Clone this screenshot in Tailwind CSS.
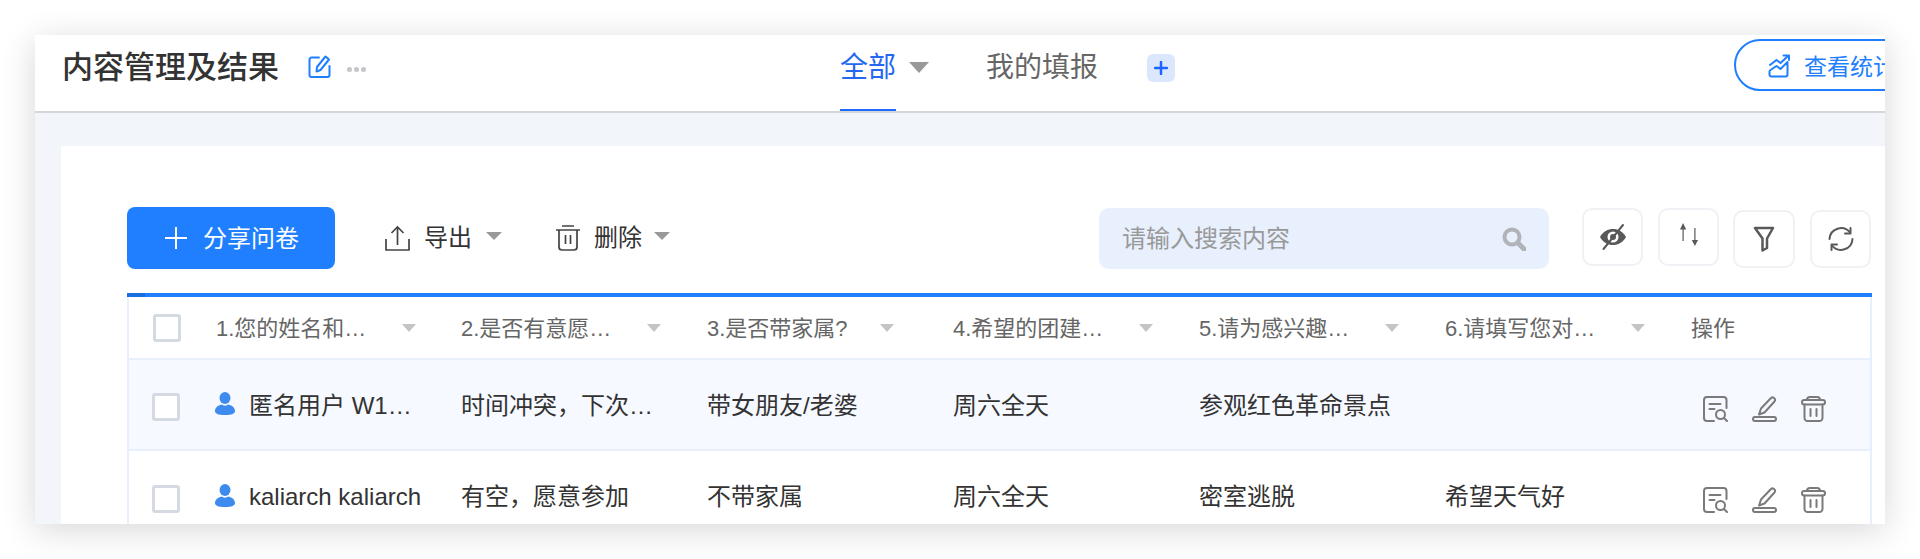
<!DOCTYPE html>
<html lang="zh-CN">
<head>
  <meta charset="UTF-8" />
  <title>内容管理及结果</title>
  <script src="https://cdn.jsdelivr.net/npm/@tailwindcss/browser@4"></script>
</head>
<body class="bg-white h-[559px] overflow-hidden pt-[35px] pl-[35px] font-['Liberation_Sans','Noto_Sans_CJK_SC',sans-serif]">

  <div class="w-[1850px] h-[489px] overflow-hidden flex flex-col bg-[#f2f5fa] shadow-[0_6px_32px_rgba(0,0,0,0.16)]">

    <!-- header -->
    <header class="h-[78px] flex-none flex items-start *:flex-none bg-white border-b-2 border-[#d4d6da] pl-[27px]">
      <h1 class="w-[246px] mt-[11px] text-[31px] leading-[44px] font-medium text-[#333] whitespace-nowrap">内容管理及结果</h1>
      <svg class="mt-[20px] w-[23px] h-[23px] text-[#1f7fff]" viewBox="0 0 23 23" fill="none" stroke="currentColor" stroke-width="2" stroke-linecap="round" stroke-linejoin="round">
        <path d="M11 2.500H3.500a2 2 0 0 0-2 2V20a2 2 0 0 0 2 2H19.500a2 2 0 0 0 2-2V11" />
        <path d="M17.500 1.500l3.500 3L12.500 15l-4 1.500L9 12z" />
      </svg>
      <div class="ml-[16px] mt-[32px] flex gap-[2px]">
        <span class="w-[5px] h-[5px] rounded-full bg-[#c4c6ca]"></span>
        <span class="w-[5px] h-[5px] rounded-full bg-[#c4c6ca]"></span>
        <span class="w-[5px] h-[5px] rounded-full bg-[#c4c6ca]"></span>
      </div>

      <!-- tabs -->
      <div class="ml-[474px] h-[76px] border-b-2 border-[#1f6bff] pt-[13px] text-[28px] leading-[40px] text-[#2468f2] whitespace-nowrap">全部</div>
      <span class="ml-[13px] mt-[27px] w-0 h-0 border-x-[10px] border-x-transparent border-t-[11px] border-t-[#999]"></span>
      <div class="ml-[57px] pt-[13px] text-[28px] leading-[40px] text-[#666] whitespace-nowrap">我的填报</div>
      <div class="ml-[49px] mt-[19px] w-[28px] h-[28px] rounded-[6px] bg-[#dbe7fd] flex items-center justify-center">
        <svg class="w-[14px] h-[14px] text-[#1a66ff]" viewBox="0 0 14 14" fill="none" stroke="currentColor" stroke-width="2.500" stroke-linecap="round"><path d="M7 1v12M1 7h12" /></svg>
      </div>

      <!-- stats button -->
      <div class="ml-[559px] mt-[4px] w-[240px] h-[52px] rounded-full border-2 border-[#1f7fff] flex items-center pl-[32px] text-[#1f7fff]">
        <svg class="w-[24px] h-[24px] flex-none mt-[1px]" viewBox="0 0 24 24" fill="none" stroke="currentColor" stroke-width="2" stroke-linecap="round" stroke-linejoin="round">
          <path d="M1.500 21V18a2 2 0 0 1 1-2l6-4 4 3 7-7V21a2 2 0 0 1-1.500 1.500H3a2 2 0 0 1-1.500-1.500z" />
          <path d="M2 11l6.500-5 4 3 7.500-7" />
          <path d="M15.500 1.500H21V6" />
        </svg>
        <span class="ml-[12px] mt-[3px] text-[23px] leading-[32px] whitespace-nowrap">查看统计</span>
      </div>
    </header>

    <!-- content -->
    <main class="flex-1 min-h-0 pt-[33px] pl-[26px]">
      <div class="h-full bg-white pt-[61px] pl-[66px] pr-[13px]">

        <!-- toolbar -->
        <div class="h-[62px] flex items-start *:flex-none">
          <button class="w-[208px] h-[62px] rounded-[8px] bg-[#1f7fff] text-white flex items-center pl-[37px]">
            <svg class="w-[24px] h-[24px]" viewBox="0 0 24 24" fill="none" stroke="currentColor" stroke-width="2"><path d="M12 1v22M1 12h22" /></svg>
            <span class="ml-[15px] mt-[1px] text-[24px] leading-[34px]">分享问卷</span>
          </button>

          <svg class="ml-[50px] mt-[18px] w-[25px] h-[26px] text-[#444]" viewBox="0 0 25 26" fill="none" stroke="currentColor" stroke-width="1.700">
            <path d="M1 14v11h23V14" /><path d="M12.500 20V2M6.500 8l6-6 6 6" />
          </svg>
          <span class="ml-[14px] mt-[14px] text-[24px] leading-[34px] text-[#333] whitespace-nowrap">导出</span>
          <span class="ml-[14px] mt-[25px] w-0 h-0 border-x-[8px] border-x-transparent border-t-[8px] border-t-[#999]"></span>

          <svg class="ml-[54px] mt-[18px] w-[24px] h-[26px] text-[#444]" viewBox="0 0 24 26" fill="none" stroke="currentColor" stroke-width="1.700" stroke-linejoin="round">
            <path d="M0 5h24M6 1h12" /><path d="M3 5v17a3 3 0 0 0 3 3h12a3 3 0 0 0 3-3V5" /><path d="M9.500 10v9M14.500 10v9" />
          </svg>
          <span class="ml-[14px] mt-[14px] text-[24px] leading-[34px] text-[#333] whitespace-nowrap">删除</span>
          <span class="ml-[12px] mt-[25px] w-0 h-0 border-x-[8px] border-x-transparent border-t-[8px] border-t-[#999]"></span>

          <div class="ml-[429px] mt-[1px] w-[450px] h-[61px] rounded-[10px] bg-[#e8f0fd] flex items-center pl-[23px] pr-[23px]">
            <span class="flex-1 text-[24px] leading-[34px] text-[#999]">请输入搜索内容</span>
            <svg class="w-[24px] h-[24px] text-[#b0b3b8]" viewBox="0 0 24 24" fill="none" stroke="currentColor" stroke-linecap="round">
              <circle cx="10" cy="10" r="7.500" stroke-width="4" /><path d="M16 16l6 6" stroke-width="5" />
            </svg>
          </div>

          <div class="ml-[33px] mt-[1px] w-[61px] h-[58px] rounded-[10px] border-2 border-[#f0f1f5] flex items-center justify-center">
            <svg class="w-[28px] h-[28px] text-[#595959]" viewBox="0 0 28 28" fill="none">
              <path fill="currentColor" fill-rule="evenodd" d="M1 14C4 8.500 9 6 14 6s10 2.500 13 8c-3 5.500-8 8-13 8S4 19.500 1 14zm13-5.500a5.500 5.500 0 1 0 0 11 5.500 5.500 0 0 0 0-11z" />
              <circle cx="14" cy="14" r="3" fill="currentColor" />
              <path d="M4.500 26L24 2" stroke="currentColor" stroke-width="2" stroke-linecap="round" />
            </svg>
          </div>
          <div class="ml-[15px] mt-[1px] w-[61px] h-[58px] rounded-[10px] border-2 border-[#f0f1f5] flex items-center justify-center">
            <svg class="w-[20px] h-[28px] text-[#595959]" viewBox="0 0 20 28" fill="currentColor">
              <path d="M3.500 6h1.200v12H3.500z" /><path d="M4.100 0L1 6.500h6.200z" />
              <path d="M15.300 5h1.200v13h-1.200z" /><path d="M15.900 23L12.800 17h6.200z" />
            </svg>
          </div>
          <div class="ml-[14px] mt-[3px] w-[62px] h-[58px] rounded-[10px] border-2 border-[#f0f1f5] flex items-center justify-center">
            <svg class="w-[22px] h-[26px] text-[#595959]" viewBox="0 0 22 26" fill="none" stroke="currentColor" stroke-width="2.500" stroke-linejoin="round">
              <path d="M2 2h18L14 12.500V22l-4.500 2.500V12.500z" />
            </svg>
          </div>
          <div class="ml-[15px] mt-[3px] w-[61px] h-[58px] rounded-[10px] border-2 border-[#f0f1f5] flex items-center justify-center">
            <svg class="w-[26px] h-[26px] text-[#595959]" viewBox="0 0 26 26" fill="none" stroke="currentColor" stroke-width="2" stroke-linecap="round" stroke-linejoin="round">
              <path d="M1.500 13A11.500 11.500 0 0 1 22 6.500" /><path d="M24.500 13A11.500 11.500 0 0 1 4 19.500" />
              <path d="M22.500 2v5.500H17" /><path d="M3.500 24v-5.500H9" />
            </svg>
          </div>
        </div>

        <!-- table -->
        <div class="mt-[24px]">
          <div class="h-[4px] bg-[#2080ff]"><div class="w-[18px] h-full bg-[#1a6fe0]"></div></div>
          <div class="border-x-2 border-[#e6effe]">

            <div class="h-[63px] flex items-center border-b-2 border-[#e8f0fd] text-[22px] leading-[32px] text-[#666]">
              <div class="w-[87px] pl-[24px] flex-none"><span class="block w-[28px] h-[28px] rounded-[3px] border-[3px] border-[#d5d9e2] bg-white"></span></div>
              <div class="w-[245px] flex-none flex items-center"><span class="w-[186px] mt-[2px] whitespace-nowrap">1.您的姓名和…</span><span class="w-0 h-0 border-x-[7px] border-x-transparent border-t-[8px] border-t-[#c4c4c4]"></span></div>
              <div class="w-[246px] flex-none flex items-center"><span class="w-[186px] mt-[2px] whitespace-nowrap">2.是否有意愿…</span><span class="w-0 h-0 border-x-[7px] border-x-transparent border-t-[8px] border-t-[#c4c4c4]"></span></div>
              <div class="w-[246px] flex-none flex items-center"><span class="w-[173px] mt-[2px] whitespace-nowrap">3.是否带家属?</span><span class="w-0 h-0 border-x-[7px] border-x-transparent border-t-[8px] border-t-[#c4c4c4]"></span></div>
              <div class="w-[246px] flex-none flex items-center"><span class="w-[186px] mt-[2px] whitespace-nowrap">4.希望的团建…</span><span class="w-0 h-0 border-x-[7px] border-x-transparent border-t-[8px] border-t-[#c4c4c4]"></span></div>
              <div class="w-[246px] flex-none flex items-center"><span class="w-[186px] mt-[2px] whitespace-nowrap">5.请为感兴趣…</span><span class="w-0 h-0 border-x-[7px] border-x-transparent border-t-[8px] border-t-[#c4c4c4]"></span></div>
              <div class="w-[246px] flex-none flex items-center"><span class="w-[186px] mt-[2px] whitespace-nowrap">6.请填写您对…</span><span class="w-0 h-0 border-x-[7px] border-x-transparent border-t-[8px] border-t-[#c4c4c4]"></span></div>
              <div class="flex-none mt-[2px]">操作</div>
            </div>

            <div class="h-[91px] flex items-center bg-[#f6f9ff] border-b-2 border-[#e8f0fd] text-[24px] leading-[34px] text-[#333]">
              <div class="w-[87px] pl-[23px] flex-none mt-[4px]"><span class="block w-[28px] h-[28px] rounded-[3px] border-[3px] border-[#d5d9e2] bg-white"></span></div>
              <div class="w-[245px] flex-none flex items-center">
                <svg class="w-[20px] h-[23px] -ml-[1px] -mt-[2px] text-[#3d8bef]" viewBox="0 0 20 23" fill="currentColor"><ellipse cx="10" cy="6" rx="5.500" ry="6" /><path d="M6.500 12.500C3 13.500 0 15.500 0 19c0 2.500 3 4 10 4s10-1.500 10-4c0-3.500-3-5.500-6.500-6.500-2 1.500-5 1.500-7 0z" /></svg>
                <span class="ml-[14px] mt-[2px] whitespace-nowrap">匿名用户 W1…</span>
              </div>
              <div class="w-[246px] flex-none whitespace-nowrap mt-[2px]">时间冲突，下次…</div>
              <div class="w-[246px] flex-none whitespace-nowrap mt-[2px]">带女朋友/老婆</div>
              <div class="w-[246px] flex-none whitespace-nowrap mt-[2px]">周六全天</div>
              <div class="w-[246px] flex-none whitespace-nowrap mt-[2px]">参观红色革命景点</div>
              <div class="w-[246px] flex-none whitespace-nowrap"></div>
              <div class="flex-none flex items-center gap-[24px] pl-[12px] mt-[8px] text-[#7a7a7a]">
                <svg class="w-[25px] h-[26px]" viewBox="0 0 25 26" fill="none" stroke="currentColor" stroke-width="2" stroke-linecap="round" stroke-linejoin="round"><path d="M23.500 12V4a3 3 0 0 0-3-3H4a3 3 0 0 0-3 3v18a3 3 0 0 0 3 3h7" /><path d="M6.500 8h11M6.500 13h5" /><circle cx="17.500" cy="18.500" r="4.500" /><path d="M21 22l3 3" /></svg>
                <svg class="w-[25px] h-[26px]" viewBox="0 0 25 26" fill="none" stroke="currentColor" stroke-width="2" stroke-linecap="round" stroke-linejoin="round"><path d="M9 12.500L18.500 2.500a2.500 2.500 0 0 1 4 3L12.500 16.500 7 18.500z" /><rect x="1" y="21" width="23" height="4" rx="2" /></svg>
                <svg class="w-[25px] h-[26px]" viewBox="0 0 25 26" fill="none" stroke="currentColor" stroke-width="2" stroke-linecap="round" stroke-linejoin="round"><path d="M6 4V3.500Q6 1 9 1h7q3 0 3 2.500V4" /><rect x="1" y="4" width="23" height="4.500" rx="2.200" /><path d="M3.500 8.500V22a3 3 0 0 0 3 3h12a3 3 0 0 0 3-3V8.500" /><path d="M9.500 13v7M15.500 13v7" /></svg>
              </div>
            </div>

            <div class="h-[91px] flex items-center text-[24px] leading-[34px] text-[#333]">
              <div class="w-[87px] pl-[23px] flex-none mt-[4px]"><span class="block w-[28px] h-[28px] rounded-[3px] border-[3px] border-[#d5d9e2] bg-white"></span></div>
              <div class="w-[245px] flex-none flex items-center">
                <svg class="w-[20px] h-[23px] -ml-[1px] -mt-[2px] text-[#3d8bef]" viewBox="0 0 20 23" fill="currentColor"><ellipse cx="10" cy="6" rx="5.500" ry="6" /><path d="M6.500 12.500C3 13.500 0 15.500 0 19c0 2.500 3 4 10 4s10-1.500 10-4c0-3.500-3-5.500-6.500-6.500-2 1.500-5 1.500-7 0z" /></svg>
                <span class="ml-[14px] whitespace-nowrap">kaliarch kaliarch</span>
              </div>
              <div class="w-[246px] flex-none whitespace-nowrap">有空，愿意参加</div>
              <div class="w-[246px] flex-none whitespace-nowrap">不带家属</div>
              <div class="w-[246px] flex-none whitespace-nowrap">周六全天</div>
              <div class="w-[246px] flex-none whitespace-nowrap">密室逃脱</div>
              <div class="w-[246px] flex-none whitespace-nowrap">希望天气好</div>
              <div class="flex-none flex items-center gap-[24px] pl-[12px] mt-[6px] text-[#7a7a7a]">
                <svg class="w-[25px] h-[26px]" viewBox="0 0 25 26" fill="none" stroke="currentColor" stroke-width="2" stroke-linecap="round" stroke-linejoin="round"><path d="M23.500 12V4a3 3 0 0 0-3-3H4a3 3 0 0 0-3 3v18a3 3 0 0 0 3 3h7" /><path d="M6.500 8h11M6.500 13h5" /><circle cx="17.500" cy="18.500" r="4.500" /><path d="M21 22l3 3" /></svg>
                <svg class="w-[25px] h-[26px]" viewBox="0 0 25 26" fill="none" stroke="currentColor" stroke-width="2" stroke-linecap="round" stroke-linejoin="round"><path d="M9 12.500L18.500 2.500a2.500 2.500 0 0 1 4 3L12.500 16.500 7 18.500z" /><rect x="1" y="21" width="23" height="4" rx="2" /></svg>
                <svg class="w-[25px] h-[26px]" viewBox="0 0 25 26" fill="none" stroke="currentColor" stroke-width="2" stroke-linecap="round" stroke-linejoin="round"><path d="M6 4V3.500Q6 1 9 1h7q3 0 3 2.500V4" /><rect x="1" y="4" width="23" height="4.500" rx="2.200" /><path d="M3.500 8.500V22a3 3 0 0 0 3 3h12a3 3 0 0 0 3-3V8.500" /><path d="M9.500 13v7M15.500 13v7" /></svg>
              </div>
            </div>

          </div>
        </div>
      </div>
    </main>
  </div>
</body>
</html>
